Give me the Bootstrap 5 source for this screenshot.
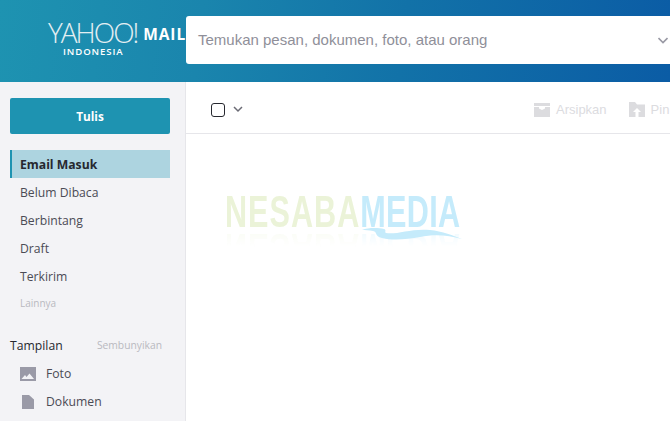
<!DOCTYPE html>
<html lang="id">
<head>
    <meta charset="UTF-8">
    <title>Yahoo Mail</title>
    <link href="https://cdn.jsdelivr.net/npm/bootstrap@5.3.0/dist/css/bootstrap.min.css" rel="stylesheet">
    <style>
        html, body { height: 421px; overflow: hidden; }
        body { font-family: "Open Sans", "Liberation Sans", sans-serif; background: #fff; }
        .mail-head { height: 82px; background: linear-gradient(97deg, #1e93b1 0%, #1a85ad 30%, #1272a8 60%, #0b5ca5 100%); }
        .brand-box { width: 186px; flex: none; padding: 18px 0 0 48px; color: #fff; white-space: nowrap; overflow: hidden; }
        .brand-top { display: flex; align-items: flex-start; height: 28px; }
        .brand-yahoo { font-weight: 300; font-size: 28px; line-height: 28px; letter-spacing: -2px; color: #e3eef2; }
        .brand-mail { font-weight: 700; font-size: 15.5px; line-height: 20px; margin: 6px 0 0 6px; letter-spacing: .9px; }
        .brand-sub { font-size: 9.6px; font-weight: 600; line-height: 11px; letter-spacing: .9px; margin: 0 0 0 15px; }
        .search-box { height: 48px; margin-top: 16px; background: #fff; border-radius: 3px 0 0 3px; padding: 0 2px 0 12px; font-family: "Liberation Sans", sans-serif; font-size: 15px; color: #8f8f99; }
        .side-col { width: 186px; flex: none; height: 339px; background: #f3f3f6; border-right: 1px solid #e6e6ea; padding: 16px 15px 0 10px; }
        .compose-btn { height: 36px; background: #1e93b1; color: #fff; font-size: 11.8px; font-weight: 700; border-radius: 2px; display: flex; align-items: center; justify-content: center; padding: 1px 0 0 0; }
        .folder-list { margin-top: 16px; }
        .folder-row { height: 28px; line-height: 29px; padding-left: 10px; font-size: 12.2px; color: #4b4b55; }
        .folder-on { background: #add4e0; border-left: 2px solid #1e93b1; padding-left: 8px; font-weight: 700; color: #26282f; }
        .folder-more { font-size: 10px; color: #b9b9c0; height: 26px; line-height: 26px; }
        .view-head { margin-top: 16px; height: 28px; font-size: 12.2px; color: #26282f; }
        .view-hide { font-size: 10.3px; color: #b9b9c0; padding-right: 8px; }
        .view-row { height: 28px; font-size: 12.2px; color: #4b4b55; padding-left: 10px; }
        .view-ico { width: 16px; margin-right: 10px; flex: none; }
        .main-col { position: relative; flex: 1 1 auto; min-width: 0; overflow: hidden; }
        .tool-bar { height: 52px; border-bottom: 1px solid #e6e6ea; padding: 4px 0 0 25px; white-space: nowrap; }
        .check-box { width: 14px; height: 14px; border: 1px solid #26282f; border-radius: 3px; flex: none; }
        .tool-caret { flex: none; margin-left: 8px; }
        .tool-act { font-family: "Liberation Sans", sans-serif; font-size: 13px; color: #dcdcdf; margin-left: 291px; }
        .tool-act svg { flex: none; }
        .tool-lbl { margin-left: 6px; }
        .tool-gap { margin-left: 22px; }
        .water-mark { position: absolute; left: 39px; top: 107px; width: 240px; height: 60px; font-family: "Liberation Sans", sans-serif; font-weight: 700; }
        .water-line { position: absolute; left: 0; top: 0; font-size: 45px; line-height: 46px; white-space: nowrap; transform: scaleX(.68); transform-origin: left top; letter-spacing: 1.5px; -webkit-box-reflect: below -9px linear-gradient(transparent 55%, rgba(255,255,255,.35)); }
        .water-a { color: #ebf3d8; }
        .water-b { color: #c5ebfb; letter-spacing: .4px; }
        .water-wave { position: absolute; left: 137px; top: 38px; }
    </style>
</head>
<body>
  <!-- header -->
  <div class="mail-head d-flex">
    <div class="brand-box">
      <div class="brand-top"><span class="brand-yahoo">YAHOO!</span><span class="brand-mail">MAIL</span></div>
      <div class="brand-sub">INDONESIA</div>
    </div>
    <div class="search-box flex-grow-1 d-flex align-items-center justify-content-between">
      <span>Temukan pesan, dokumen, foto, atau orang</span>
      <svg width="10" height="7" viewBox="0 0 10 7"><path d="M.5 1l4.500 4.500L9.500 1" fill="none" stroke="#9a9aa5" stroke-width="1.600"/></svg>
    </div>
  </div>

  <div class="d-flex">
    <!-- sidebar -->
    <div class="side-col">
      <div class="compose-btn">Tulis</div>
      <div class="folder-list">
        <div class="folder-row folder-on">Email Masuk</div>
        <div class="folder-row">Belum Dibaca</div>
        <div class="folder-row">Berbintang</div>
        <div class="folder-row">Draft</div>
        <div class="folder-row">Terkirim</div>
        <div class="folder-row folder-more">Lainnya</div>
      </div>
      <div class="view-head d-flex align-items-center justify-content-between">
        <span>Tampilan</span><span class="view-hide">Sembunyikan</span>
      </div>
      <div class="view-row d-flex align-items-center">
        <svg class="view-ico" width="16" height="14" viewBox="0 0 16 14"><path fill="#9a9aa7" d="M0 0h16v14H0z"/><path fill="#f3f3f6" d="M1.500 12l3.500-4 1.500 2 3-3.500 4.500 5.500z"/></svg>
        <span>Foto</span>
      </div>
      <div class="view-row d-flex align-items-center">
        <svg class="view-ico" width="16" height="14" viewBox="0 0 16 14"><path fill="#9a9aa7" d="M2 0h7l5 4.500V14H2z"/></svg>
        <span>Dokumen</span>
      </div>
    </div>

    <!-- main -->
    <div class="main-col">
      <div class="tool-bar d-flex align-items-center">
        <span class="check-box"></span>
        <svg class="tool-caret" width="10" height="7" viewBox="0 0 10 7"><path d="M1 1l4 4 4-4" fill="none" stroke="#6b6b75" stroke-width="1.500"/></svg>
        <div class="tool-act d-flex align-items-center">
          <svg width="16" height="14" viewBox="0 0 16 14"><path fill="#dcdcdf" d="M0 0h16v3H0zM0 4h16v10H0z"/><path fill="#fff" d="M5 4h6v1.500l-3 1.500-3-1.500z"/></svg>
          <span class="tool-lbl">Arsipkan</span>
          <svg class="tool-gap" width="16" height="15" viewBox="0 0 16 15"><path fill="#dcdcdf" d="M0 0h6l2 2.500h8V15H0z"/><path fill="#fff" d="M8 6l4 4H9.500v5h-3v-5H4z"/></svg>
          <span class="tool-lbl">Pin</span>
        </div>
      </div>
      <div class="water-mark">
        <div class="water-line"><span class="water-a">NESABA</span><span class="water-b">MEDIA</span></div>
        <svg class="water-wave" width="100" height="13" viewBox="0 0 100 13"><path fill="#c5ebfb" d="M0 3C6 .5 16 .5 22 2c3 1 0 3 2 4 10 2 26-5 44-3 12 1 24 6 32 9-14-4-28-5-42-2-12 2-26 4-38 1C12 9 16 5 11 4 7 3 3 3 0 3z"/></svg>
      </div>
    </div>
  </div>

  <script src="https://cdn.jsdelivr.net/npm/bootstrap@5.3.0/dist/js/bootstrap.bundle.min.js"></script>
</body>
</html>
